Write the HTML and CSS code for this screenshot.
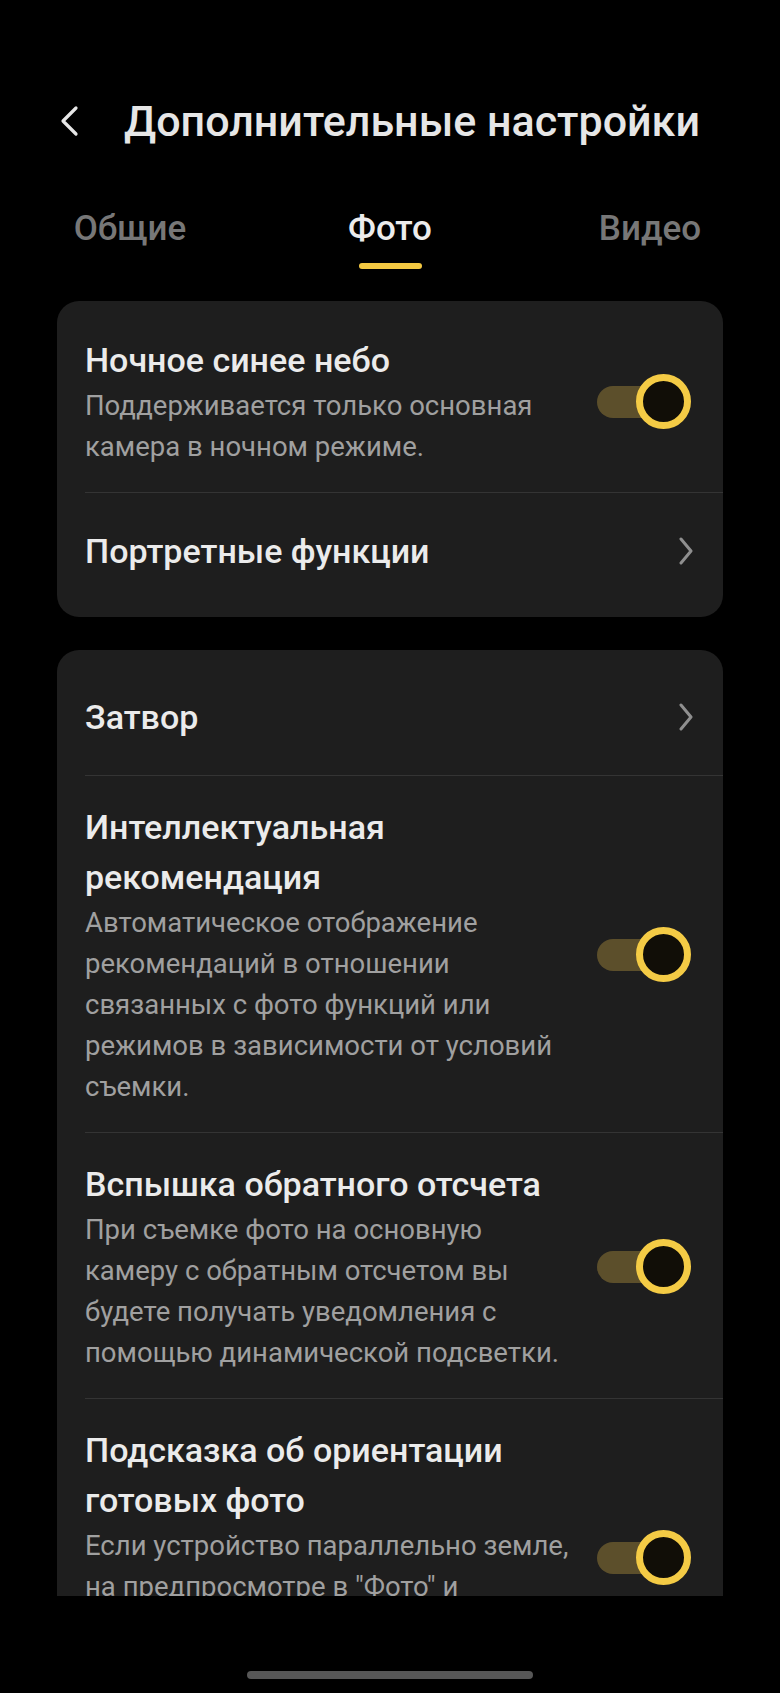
FILE: index.html
```html
<!DOCTYPE html>
<html lang="ru">
<head>
    <meta charset="UTF-8">
    <title>Дополнительные настройки</title>
    <link rel="stylesheet" href="styles.css">
</head>
<body>
    <div class="screen">
        <header class="topbar">
            <svg class="back" width="22" height="32" viewBox="0 0 22 32">
                <path d="M18 3 L5 16 L18 29" fill="none" stroke="#e6e6e6" stroke-width="3.2" stroke-linecap="round" stroke-linejoin="round"/>
            </svg>
            <h1>Дополнительные настройки</h1>
        </header>

        <nav class="tabs">
            <a class="tab">Общие</a>
            <a class="tab active">Фото</a>
            <a class="tab">Видео</a>
        </nav>

        <main class="content">
            <section class="card">
                <div class="row">
                    <div class="text">
                        <div class="title">Ночное синее небо</div>
                        <div class="desc">Поддерживается только основная камера в ночном режиме.</div>
                    </div>
                    <div class="switch"><span class="track"></span><span class="knob"></span></div>
                </div>
                <div class="row link">
                    <div class="title">Портретные функции</div>
                    <svg class="chev" width="16" height="28" viewBox="0 0 16 28">
                        <path d="M3 2 L13 14 L3 26" fill="none" stroke="#8f8f8f" stroke-width="3" stroke-linecap="round" stroke-linejoin="round"/>
                    </svg>
                </div>
            </section>

            <section class="card last">
                <div class="row link">
                    <div class="title">Затвор</div>
                    <svg class="chev" width="16" height="28" viewBox="0 0 16 28">
                        <path d="M3 2 L13 14 L3 26" fill="none" stroke="#8f8f8f" stroke-width="3" stroke-linecap="round" stroke-linejoin="round"/>
                    </svg>
                </div>
                <div class="row">
                    <div class="text">
                        <div class="title">Интеллектуальная рекомендация</div>
                        <div class="desc">Автоматическое отображение рекомендаций в отношении связанных с фото функций или режимов в зависимости от условий съемки.</div>
                    </div>
                    <div class="switch"><span class="track"></span><span class="knob"></span></div>
                </div>
                <div class="row">
                    <div class="text">
                        <div class="title">Вспышка обратного отсчета</div>
                        <div class="desc">При съемке фото на основную камеру с обратным отсчетом вы будете получать уведомления с помощью динамической подсветки.</div>
                    </div>
                    <div class="switch"><span class="track"></span><span class="knob"></span></div>
                </div>
                <div class="row">
                    <div class="text">
                        <div class="title">Подсказка об ориентации готовых фото</div>
                        <div class="desc">Если устройство параллельно земле, на предпросмотре в "Фото" и "Портрет" будет показана подсказка о его ориентации.</div>
                    </div>
                    <div class="switch"><span class="track"></span><span class="knob"></span></div>
                </div>
            </section>
        </main>

        <div class="home-bar"></div>
    </div>
</body>
</html>
```

FILE: styles.css
```css
body {
    margin: 0;
    padding: 0;
    background-color: #000000;
    font-family: 'Roboto', 'Noto Sans', sans-serif;
    color: #e9e9e9;
}

.screen {
    position: relative;
    width: 780px;
    height: 1693px;
    overflow: hidden;
    display: flex;
    flex-direction: column;
}

.topbar {
    display: flex;
    align-items: center;
    height: 80px;
    margin-top: 81px;
    padding-left: 58px;
}

.topbar .back {
    flex-shrink: 0;
}

.topbar h1 {
    margin: 0 0 0 44px;
    font-size: 43px;
    font-weight: 500;
    color: #e6e6e6;
    white-space: nowrap;
}

.tabs {
    display: grid;
    grid-template-columns: repeat(3, 1fr);
    margin-top: 42px;
    height: 56px;
}

.tab {
    position: relative;
    text-align: center;
    font-size: 35px;
    font-weight: 500;
    color: #777777;
    line-height: 52px;
}

.tab.active {
    color: #ececec;
}

.tab.active::after {
    content: "";
    position: absolute;
    left: 50%;
    top: 60px;
    width: 63px;
    height: 6px;
    margin-left: -31px;
    border-radius: 3px;
    background-color: #f4c942;
}

.content {
    padding: 42px 57px 0;
    display: flex;
    flex-direction: column;
    gap: 33px;
}

.card {
    background-color: #1e1e1e;
    border-radius: 22px;
    padding: 8px 0;
}

.card.last {
    height: 946px;
    box-sizing: border-box;
    border-radius: 22px 22px 0 0;
    overflow: hidden;
}

.row {
    display: flex;
    align-items: center;
    justify-content: space-between;
    margin-left: 28px;
    padding: 26px 32px 25px 0;
    border-top: 1px solid #343434;
}

.row:first-child {
    border-top: none;
}

.row.link {
    height: 117px;
    box-sizing: border-box;
    padding: 0 29px 0 0;
}

.text {
    flex: 1;
    padding-right: 24px;
}

.title {
    font-size: 34px;
    font-weight: 500;
    line-height: 50px;
    color: #ebebeb;
}

.desc {
    font-size: 27.5px;
    line-height: 41px;
    color: #a0a0a0;
}

.switch {
    position: relative;
    width: 94px;
    height: 55px;
    flex-shrink: 0;
}

.switch .track {
    position: absolute;
    left: 0;
    top: 12px;
    width: 64px;
    height: 32px;
    border-radius: 16px;
    background-color: #5c4f2b;
}

.switch .knob {
    position: absolute;
    right: 0;
    top: 0;
    width: 55px;
    height: 55px;
    box-sizing: border-box;
    border-radius: 50%;
    border: 7px solid #f4cb45;
    background-color: #110e07;
}

.home-bar {
    position: absolute;
    left: 247px;
    top: 1671px;
    width: 286px;
    height: 8px;
    border-radius: 4px;
    background-color: #575757;
}
```
